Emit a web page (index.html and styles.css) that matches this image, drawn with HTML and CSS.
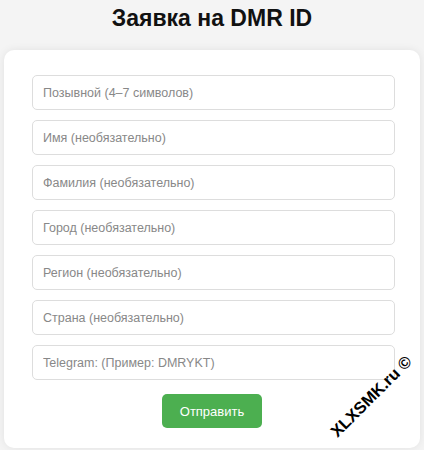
FILE: index.html
```html
<!DOCTYPE html>
<html lang="ru">
<head>
    <meta charset="UTF-8">
    <meta name="viewport" content="width=device-width, initial-scale=1.0">
    <title>Заявка на DMR ID</title>
    <link rel="stylesheet" href="styles.css">
</head>
<body>
    <h1>Заявка на DMR ID</h1>
    <form id="dmrForm" class="card">
        <input type="text" name="callsign" placeholder="Позывной (4–7 символов)" required>
        <input type="text" name="first_name" placeholder="Имя (необязательно)">
        <input type="text" name="last_name" placeholder="Фамилия (необязательно)">
        <input type="text" name="city" placeholder="Город (необязательно)">
        <input type="text" name="region" placeholder="Регион (необязательно)">
        <input type="text" name="country" placeholder="Страна (необязательно)">
        <input type="text" name="telegram" placeholder="Telegram: (Пример: DMRYKT)">
        <div class="actions">
            <button type="submit">Отправить</button>
        </div>
    </form>
    <div class="watermark">XLXSMK.ru ©</div>
</body>
</html>
```

FILE: styles.css
```css
body {
    font-family: "Liberation Sans", Arial, sans-serif;
    background-color: #f4f4f4;
    margin: 0;
    padding: 0 4px;
    position: relative;
    height: 450px;
    overflow: hidden;
}
h1 {
    text-align: center;
    font-size: 23px;
    line-height: 28px;
    margin: 4px 0 18px;
    color: #111;
}
.card {
    background-color: #fff;
    border-radius: 10px;
    box-shadow: 0 0 8px rgba(0, 0, 0, 0.08);
    padding: 25px 25px 20px 28px;
    display: flex;
    flex-direction: column;
    gap: 10px;
}
input {
    height: 35px;
    padding: 0 10px;
    border: 1px solid #ddd;
    border-radius: 5px;
    font-family: inherit;
    font-size: 12.5px;
    box-sizing: border-box;
    width: 100%;
}
input::placeholder {
    color: #888;
}
.actions {
    display: flex;
    justify-content: center;
    margin-top: 4px;
    padding-right: 3px;
}
button {
    background-color: #4caf50;
    color: white;
    font-family: inherit;
    font-size: 13px;
    width: 100px;
    height: 34px;
    border: none;
    border-radius: 5px;
    cursor: pointer;
}
button:hover {
    background-color: #45a049;
}
.watermark {
    position: absolute;
    left: 318px;
    top: 387px;
    font-size: 16.5px;
    font-weight: bold;
    color: #000;
    transform: rotate(-45deg);
    white-space: nowrap;
}
```
